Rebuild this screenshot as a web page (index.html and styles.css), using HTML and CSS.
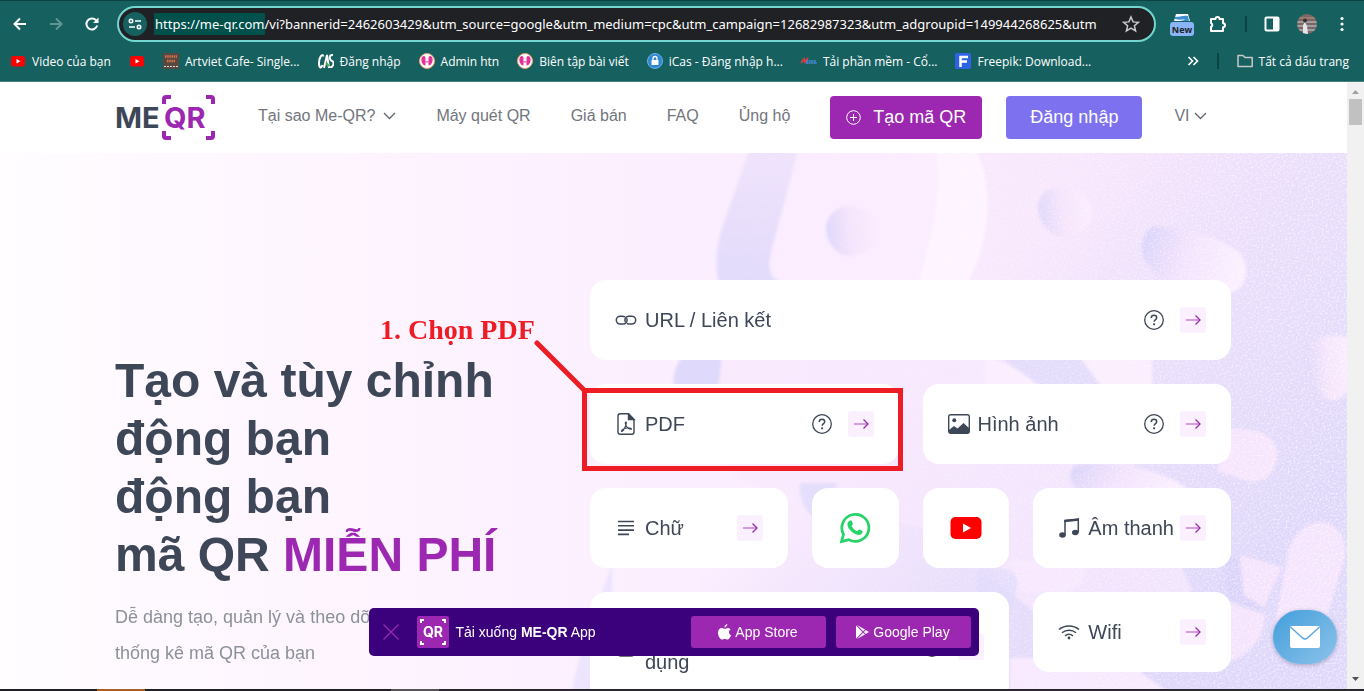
FILE: index.html
```html
<!DOCTYPE html>
<html lang="vi">
<head>
<meta charset="utf-8">
<title>ME-QR</title>
<link rel="stylesheet" href="styles.css">
</head>
<body>
<svg class="sprite" aria-hidden="true">
  <symbol id="arrow" viewBox="0 0 26 26"><path d="M6 13h14" fill="none" stroke="#c77fd2" stroke-width="1.500"/><path d="M15.500 8.500 20 13l-4.500 4.500" fill="none" stroke="#9c27b0" stroke-width="1.300"/></symbol>
  <symbol id="help" viewBox="0 0 20 20"><circle cx="10" cy="10" r="9.300" fill="none" stroke="#3d4757" stroke-width="1.300"/><path d="M7.300 7.900c0-1.700 1.200-2.600 2.700-2.600s2.700.9 2.700 2.400c0 1.900-2.500 2-2.500 4.100" fill="none" stroke="#3d4757" stroke-width="1.500"/><circle cx="10.100" cy="14.300" r="1.100" fill="#3d4757"/></symbol>
  <symbol id="chevron" viewBox="0 0 13 8"><path d="M1 1l5.500 5.500L12 1" fill="none" stroke="#5f6670" stroke-width="1.300"/></symbol>
  <symbol id="yt" viewBox="0 0 16 16"><rect x="1" y="3" width="14" height="10.500" rx="2.500" fill="#f00"/><path d="M6.500 6v4.600l4-2.300z" fill="#fff"/></symbol>
  <symbol id="htn" viewBox="0 0 16 16"><circle cx="8" cy="8" r="7.500" fill="#fff" stroke="#f0a26b"/><path d="M3 4c2-2 3.500-1 3.500 1v7.500C4 13 1 8 3 4zM13 4c-2-2-3.500-1-3.500 1v7.500C12 13 15 8 13 4z" fill="#e5309a"/><path d="M6 8h4v1.500H6z" fill="#f26cb5"/></symbol>
</svg>

<header class="browser">
  <div class="toolbar">
    <button class="tool" aria-label="Back"><svg width="16" height="16" viewBox="0 0 16 16"><path d="M14 8H3M8 2.500 2.500 8 8 13.500" fill="none" stroke="#fff" stroke-width="2"/></svg></button>
    <button class="tool" aria-label="Forward"><svg width="16" height="16" viewBox="0 0 16 16"><path d="M2 8h11M8 2.500 13.500 8 8 13.500" fill="none" stroke="#5f9695" stroke-width="2"/></svg></button>
    <button class="tool" aria-label="Reload"><svg width="16" height="16" viewBox="0 0 16 16"><path d="M13.200 9.500A5.500 5.500 0 1 1 12 4.200L13.500 6" fill="none" stroke="#fff" stroke-width="2"/><path d="M14.500 1.500V7H9z" fill="#fff"/></svg></button>
    <div class="omnibox">
      <button class="site-info" aria-label="Site info"><svg width="14" height="12" viewBox="0 0 14 12" fill="none" stroke="#fff" stroke-width="1.600"><circle cx="3" cy="3" r="1.700"/><path d="M7 3h6M1 9h6"/><circle cx="11" cy="9" r="1.700"/></svg></button>
      <input class="url" aria-label="URL" value="https://me-qr.com/vi?bannerid=2462603429&amp;utm_source=google&amp;utm_medium=cpc&amp;utm_campaign=12682987323&amp;utm_adgroupid=149944268625&amp;utm">
      <button class="tool" aria-label="Bookmark"><svg width="18" height="18" viewBox="0 0 18 18"><path d="M9 2l2.100 4.900 5.300.4-4 3.500 1.200 5.200L9 13.200 4.400 16l1.200-5.200-4-3.500 5.300-.4z" fill="none" stroke="#c9cacc" stroke-width="1.500"/></svg></button>
    </div>
    <button class="tool" aria-label="New"><svg width="24" height="26" viewBox="0 0 24 26"><path d="M6 3h12l2 7H4z" fill="#fff"/><path d="M5 6c5 0 8-2 13-1l1 5H9c3 0 5-1 6-2-3 1-7 1-10 0z" fill="#3f8fd0"/><rect y="11" width="24" height="14" rx="3" fill="#8ab4f8"/><text x="12" y="22" text-anchor="middle" class="badge-text">New</text></svg></button>
    <button class="tool" aria-label="Extensions"><svg width="20" height="20" viewBox="0 0 20 20"><path d="M3 5h4.500a2 2 0 0 1 4 0H15v4.200a2 2 0 0 1 0 4V17H3v-4a2.200 2.200 0 0 0 0-4z" fill="none" stroke="#fff" stroke-width="2" stroke-linejoin="round"/></svg></button>
    <span class="divider"></span>
    <button class="tool" aria-label="Side panel"><svg width="16" height="16" viewBox="0 0 16 16"><rect x="1.500" y="1.500" width="13" height="13" rx="1" fill="none" stroke="#fff" stroke-width="2"/><path d="M9 1h6v14H9z" fill="#fff"/></svg></button>
    <button class="tool" aria-label="Profile"><svg width="20" height="20" viewBox="0 0 20 20"><clipPath id="round"><circle cx="10" cy="10" r="10"/></clipPath><g clip-path="url(#round)"><path fill="#7d6764" d="M0 0h20v20H0z"/><path d="M0 8h20M0 12h20M0 16h20" stroke="#a9b0b4" stroke-width="1.500"/><path d="M0 4h20" stroke="#9a7c70" stroke-width="2"/><path d="M6 20l0-9 2-3 2 4 1 8z" fill="#e6e6ea"/><circle cx="8" cy="6.500" r="2" fill="#3b2f2f"/></g></svg></button>
    <button class="tool" aria-label="Menu"><svg width="16" height="16" viewBox="0 0 16 16" fill="#fff"><circle cx="8" cy="2.500" r="1.600"/><circle cx="8" cy="8" r="1.600"/><circle cx="8" cy="13.500" r="1.600"/></svg></button>
  </div>
  <nav class="bookmarks">
    <a href="#"><svg width="16" height="16"><use href="#yt"/></svg>Video của bạn</a>
    <a href="#" aria-label="YouTube"><svg width="16" height="16"><use href="#yt"/></svg></a>
    <a href="#"><svg width="16" height="16" viewBox="0 0 16 16"><path fill="#594840" d="M0 0h16v16H0z"/><path d="M2 3.500h12M4 8h8" stroke="#d9714a" stroke-width="2.500" stroke-dasharray="1.500 .7"/><path d="M1 13.500h14" stroke="#ddd" stroke-dasharray="2 1"/></svg>Artviet Cafe- Single...</a>
    <a href="#"><svg width="16" height="16" viewBox="0 0 16 16" fill="none" stroke="#fff" stroke-width="2"><path d="M5.500 3.500C4-.5 1 5 1 10s2 6 3.500 2M6 15 9 2l2 13M15 2c-4-1-4 5-1 6s1 7-2 6"/><path d="M8 10l3 3" stroke="#4caf50"/></svg>Đăng nhập</a>
    <a href="#"><svg width="16" height="16"><use href="#htn"/></svg>Admin htn</a>
    <a href="#"><svg width="16" height="16"><use href="#htn"/></svg>Biên tập bài viết</a>
    <a href="#"><svg width="16" height="16" viewBox="0 0 16 16"><circle cx="8" cy="8" r="7.500" fill="#2f86d1" stroke="#6bb2ea"/><rect x="4.500" y="7" width="7" height="5" fill="#fff"/><path d="M6 7V5.500a2 2 0 0 1 4 0V7" fill="none" stroke="#fff" stroke-width="1.300"/></svg>iCas - Đăng nhập h...</a>
    <a href="#"><svg width="16" height="16" viewBox="0 0 16 16"><path d="M0 10l3-4 1 3 3-4" fill="none" stroke="#e33b3b" stroke-width="1.800"/><path d="M5 8h10M5 10h11" stroke="#4a8de0" stroke-width="1.500" stroke-dasharray="2 .6"/></svg>Tải phần mềm - Cổ...</a>
    <a href="#"><svg width="16" height="16" viewBox="0 0 16 16"><rect width="16" height="16" rx="2" fill="#2f63e6"/><path d="M5.500 14V4H13M5.500 8.500H12" fill="none" stroke="#fff" stroke-width="2.500"/></svg>Freepik: Download...</a>
    <button class="tool more" aria-label="More bookmarks"><svg width="12" height="10" viewBox="0 0 12 10"><path d="M1.500 1l4 4-4 4M6.500 1l4 4-4 4" fill="none" stroke="#fff" stroke-width="1.600"/></svg></button>
    <span class="divider"></span>
    <a href="#"><svg width="16" height="16" viewBox="0 0 16 16"><path d="M1 2.500h5l2 2h7.200v9H1z" fill="none" stroke="#c6c8c8" stroke-width="1.500" stroke-linejoin="round"/></svg>Tất cả dấu trang</a>
  </nav>
</header>

<div class="viewport">
  <div class="page">
    <header class="site-header">
      <a class="logo" href="#" aria-label="ME QR"><svg width="100" height="46" viewBox="0 0 100 46"><path d="M49 9V4q0-2 2-2h5M91 2h5q2 0 2 2v5M49 36v5q0 2 2 2h5M91 43h5q2 0 2-2v-5" fill="none" stroke="#9c27b0" stroke-width="4"/></svg><span class="logo-me">ME</span><span class="logo-qr">QR</span></a>
      <nav class="site-nav">
        <a href="#">Tại sao Me-QR?<svg width="13" height="8"><use href="#chevron"/></svg></a>
        <a href="#">Máy quét QR</a>
        <a href="#">Giá bán</a>
        <a href="#">FAQ</a>
        <a href="#">Ủng hộ</a>
      </nav>
      <div class="actions">
        <button class="btn create"><svg width="15" height="15" viewBox="0 0 15 15" fill="none" stroke="#fff"><circle cx="7.500" cy="7.500" r="6.800"/><path d="M7.500 4v7M4 7.500h7"/></svg>Tạo mã QR</button>
        <button class="btn login">Đăng nhập</button>
        <label class="lang"><select aria-label="Ngôn ngữ"><option>VI</option></select><svg width="13" height="8"><use href="#chevron"/></svg></label>
      </div>
    </header>

    <main class="hero">
      <svg class="backdrop" viewBox="0 0 1347 536" preserveAspectRatio="xMaxYMin slice" aria-hidden="true">
        <defs>
          <linearGradient id="base"><stop offset="0" stop-color="#fffdff"/><stop offset=".2" stop-color="#fef6ff"/><stop offset=".45" stop-color="#fcf0ff"/><stop offset=".8" stop-color="#f8e7fd"/><stop offset="1" stop-color="#efdffb"/></linearGradient>
          <linearGradient id="lower" x1=".3" y1="0" x2="1" y2=".6"><stop offset=".3" stop-color="#e6dcfb" stop-opacity="0"/><stop offset=".75" stop-color="#e6dcfb"/><stop offset="1" stop-color="#e0d8fa"/></linearGradient>
          <linearGradient id="band" x1="0" y1="0" x2="0" y2="1"><stop offset="0" stop-color="#f0e3fc"/><stop offset="1" stop-color="#e0dafb"/></linearGradient>
          <linearGradient id="dot" x1="0" y1=".4" x2="1" y2=".3"><stop offset="0" stop-color="#dfd8fa"/><stop offset=".45" stop-color="#f6e4fc"/><stop offset="1" stop-color="#fbedff"/></linearGradient>
          <linearGradient id="pill" x1="0" y1=".4" x2="1" y2=".6"><stop offset="0" stop-color="#dcd5fa"/><stop offset=".4" stop-color="#f3e2fd"/><stop offset="1" stop-color="#fbf0ff"/></linearGradient>
          <filter id="soft" x="-20%" y="-20%" width="140%" height="140%"><feGaussianBlur stdDeviation="1.500"/></filter>
          <filter id="grain"><feTurbulence type="fractalNoise" baseFrequency=".5" numOctaves="2"/><feColorMatrix values="0 0 0 0 1  0 0 0 0 1  0 0 0 0 1  1.800 0 0 0 -.8"/></filter>
          <linearGradient id="fade"><stop offset=".5" stop-color="#000"/><stop offset="1" stop-color="#fff"/></linearGradient>
          <mask id="right"><path fill="url(#fade)" d="M0 0h1347v536H0z"/></mask>
        </defs>
        <path fill="url(#base)" d="M0 0h1347v536H0z"/>
        <path fill="url(#lower)" d="M700 0h647v536H700z"/>
        <g filter="url(#soft)">
          <path d="M750-5h49l-26 100c-6 20-6 30 12 36v15h-58c-14-20-12-45-6-68z" fill="url(#band)"/>
          <path d="M799-5h176c22 42 12 100-7 135H788c-20-10-20-20-15-38z" fill="#fbedff"/>
          <path d="M935-5h40c22 42 12 100-7 135h-50c14-45 25-90 17-135z" fill="#fdf4ff"/>
          <path d="M846 53c20 0 36 12 34 26-2 16-18 24-32 24-14-2-22-16-22-28 0-10 8-20 20-22z" fill="url(#dot)"/>
          <path d="M1045 38c20-10 48 0 47 24-1 14-16 22-30 22-14-2-24-18-24-29 0-7 3-13 7-17z" fill="url(#dot)"/>
          <path d="M1155 73c40 4 94 16 91 46-2 18-16 26-34 22-40-8-68-22-70-44-1-12 5-22 13-24z" fill="url(#pill)"/>
          <path d="M690 202c-22 10-22 40-8 66l60 60 190 50 200 158 60-100-100-214-130-20z" fill="#f8e8fe" opacity=".7"/>
          <path d="M684 202h38l-4 36h-44c-2-16 2-28 10-36z" fill="#dfd9fb"/>
          <path d="M800 330h38l-20 36c-14-6-20-24-18-36z" fill="#e0dafb" opacity=".8"/>
          <path d="M1000 205h90l20 35h-60z" fill="#e4dcfb"/>
          <path d="M985 205c30 6 45 20 60 35h-60zM1080 205h72v35h-45z" fill="#fbeefe"/>
          <path d="M1308 190c20-10 39-10 45 0v40c-10 20-28 24-36 6-8-14-14-34-9-46z" fill="url(#dot)"/>
          <path d="M1075 312c30-4 85 0 115 26h-110c-12-6-12-18-5-26z" fill="url(#pill)"/>
          <path d="M1225 276c30-2 54 6 52 28-2 18-14 26-30 24l-30-10z" fill="#f7e5fd"/>
          <path d="M1289 396c8-22 28-32 42-24 14 8 16 24 12 38l-18 60h-50z" fill="#f5e4fd"/>
          <path d="M1222 400l20 4 30 4-14 50-30-10z" fill="#d9d2fa" opacity=".7"/>
          <path d="M1240 402l42 12-18 40-20-12zM1226 448l39 14c-2 26-18 44-39 46z" fill="#f5e3fd"/>
          <path d="M612 410c-12 40-34 86-40 130h40V410z" fill="#e6dffc" opacity=".7"/>
          <path d="M980 408l40 14-10 40-34-10z" fill="#e0dafb" opacity=".7"/>
          <path d="M1010 408h72c8 20-4 28-20 31h-40z" fill="#f8e8fe"/>
          <path d="M1010 505h110l50 35H1010z" fill="#f8e9fe"/>
        </g>
        <path d="M0 0h1347v536H0z" filter="url(#grain)" mask="url(#right)"/>
      </svg>

      <div class="hero-grid">
        <section class="intro">
          <h1>Tạo và tùy chỉnh<br>động bạn<br>động bạn<br>mã QR <em>MIỄN PHÍ</em></h1>
          <p>Dễ dàng tạo, quản lý và theo dõi<br>thống kê mã QR của bạn</p>
        </section>

        <section class="cards">
          <div class="card full">
            <a class="label" href="#"><svg width="22" height="22" viewBox="0 0 22 22" fill="none" stroke="#3d4757" stroke-width="1.500"><path d="M10 7.900Q9 7.200 7.500 7.200H5.200a3.900 3.900 0 0 0 0 7.800h3a3.900 3.900 0 0 0 3.900-3.900q0-1-.6-1.900"/><path d="M12 14.300q1 .7 2.500.7h2.300a3.900 3.900 0 0 0 0-7.800h-3a3.900 3.900 0 0 0-3.900 3.900q0 1 .6 1.900"/></svg>URL / Liên kết</a>
            <button class="help" aria-label="Trợ giúp"><svg width="20" height="20"><use href="#help"/></svg></button>
            <a class="go" href="#" aria-label="URL"><svg width="26" height="26"><use href="#arrow"/></svg></a>
          </div>
          <div class="card half">
            <a class="label" href="#"><svg width="22" height="22" viewBox="0 0 22 22" fill="none" stroke="#3d4757" stroke-width="1.400"><path d="M13.500.8H5.300A2.300 2.300 0 0 0 3 3.100v15.800a2.300 2.300 0 0 0 2.300 2.300h11.400a2.300 2.300 0 0 0 2.300-2.300V6.500z"/><path d="M13.500.8v5.700H19z" fill="#3d4757"/><path d="M11 9c-1.200 0-.5 3 .5 4.500s3 3 4.500 2.700-1-1.700-4-1.200-5.500 2-5.500 3 2-.2 3-2.500S12 9 11 9z" stroke-width="1.200"/></svg>PDF</a>
            <button class="help" aria-label="Trợ giúp"><svg width="20" height="20"><use href="#help"/></svg></button>
            <a class="go" href="#" aria-label="PDF"><svg width="26" height="26"><use href="#arrow"/></svg></a>
            <span class="note-frame"></span>
            <svg class="note-line" width="56" height="56" viewBox="0 0 56 56"><path d="M3 3l48 48" stroke="#ee1c25" stroke-width="5" stroke-linecap="round"/></svg>
            <strong class="note-text">1. Chọn PDF</strong>
          </div>
          <div class="card half">
            <a class="label" href="#"><svg width="22" height="22" viewBox="0 0 22 22"><rect x=".7" y="1.700" width="20.600" height="18.600" rx="2" fill="none" stroke="#3d4757" stroke-width="1.400"/><circle cx="6.300" cy="7.300" r="2" fill="#3d4757"/><path d="M1 17l5-4 3.500 2.500L15.500 10l5.500 5v3.500q0 2-2 2H3q-2 0-2-2z" fill="#3d4757"/></svg>Hình ảnh</a>
            <button class="help" aria-label="Trợ giúp"><svg width="20" height="20"><use href="#help"/></svg></button>
            <a class="go" href="#" aria-label="Hình ảnh"><svg width="26" height="26"><use href="#arrow"/></svg></a>
          </div>
          <div class="card double">
            <a class="label" href="#"><svg width="22" height="22" viewBox="0 0 22 22"><path d="M3 4.500h16M3 8.800h16M3 13.100h16M3 17.400h11" stroke="#3d4757" stroke-width="1.600"/></svg>Chữ</a>
            <a class="go" href="#" aria-label="Chữ"><svg width="26" height="26"><use href="#arrow"/></svg></a>
          </div>
          <a class="card single" href="#" aria-label="WhatsApp"><svg width="32" height="32" viewBox="0 0 32 32"><path d="M2.500 29.500l2-7.200A13.500 13.500 0 1 1 9.700 27.600z" fill="none" stroke="#25d366" stroke-width="2.700"/><path d="M11 8.500c.8-.4 1.500-.2 1.900.7l1 2.300c.3.900-1.500 2-1.200 2.700 1.200 2.300 3 3.900 5.200 4.900.9.300 1.700-1.900 2.600-1.500l2.500 1.200c.8.500.6 1.500.1 2.400-.9 1.500-2.700 2-4.600 1.600-4.800-1.200-9-5.500-10-9.300-.4-2 .6-4.300 2.500-5z" fill="#25d366"/></svg></a>
          <a class="card single" href="#" aria-label="YouTube"><svg width="32" height="22" viewBox="0 0 32 22"><rect x=".5" width="31" height="22" rx="5" fill="#f00"/><path d="M13 6.500v9l8-4.500z" fill="#fff"/></svg></a>
          <div class="card double">
            <a class="label" href="#"><svg width="22" height="22" viewBox="0 0 22 22"><path d="M7 18V3.500l13.300-1.300v13.300" fill="none" stroke="#3d4757" stroke-width="1.500"/><path d="M6.300 3L21 1.500v2.300L6.300 5.200z" fill="#3d4757"/><ellipse cx="4.500" cy="18" rx="3.300" ry="2.700" fill="#3d4757"/><ellipse cx="17.300" cy="15.500" rx="3.300" ry="2.700" fill="#3d4757"/></svg>Âm thanh</a>
            <a class="go" href="#" aria-label="Âm thanh"><svg width="26" height="26"><use href="#arrow"/></svg></a>
          </div>
          <div class="card quad">
            <a class="label two-line" href="#"><svg width="22" height="22" viewBox="0 0 22 22"><rect x="3" y="1" width="16" height="19" rx="3" fill="none" stroke="#3d4757" stroke-width="1.500"/></svg><span>dụng</span></a>
            <button class="help" aria-label="Trợ giúp"><svg width="20" height="20"><use href="#help"/></svg></button>
            <a class="go" href="#" aria-label="Mở"><svg width="26" height="26"><use href="#arrow"/></svg></a>
          </div>
          <div class="card double">
            <a class="label" href="#"><svg width="22" height="22" viewBox="0 0 22 22" fill="none" stroke="#3d4757" stroke-width="1.500"><path d="M1 8.500c5.500-4.700 14.500-4.700 20 0M4 11.700c4-3.400 10-3.400 14 0M7 14.900c2.500-2 5.500-2 8 0"/><circle cx="11" cy="17" r="1.400" fill="#3d4757" stroke="none"/></svg>Wifi</a>
            <a class="go" href="#" aria-label="Wifi"><svg width="26" height="26"><use href="#arrow"/></svg></a>
          </div>
        </section>
      </div>
    </main>

    <aside class="app-banner">
      <button class="close" aria-label="Đóng"><svg width="16" height="16" viewBox="0 0 16 16"><path d="M.5.5l15 15M15.500.5l-15 15" stroke="#9c27b0" stroke-width="1.200"/></svg></button>
      <svg class="app-icon" width="32" height="32" viewBox="0 0 32 32"><rect width="32" height="32" rx="2" fill="#9c27b0"/><path d="M4 7V4h3M25 4h3v3M4 25v3h3M25 28h3v-3" fill="none" stroke="#fff" stroke-width="2"/><text x="16" y="21" text-anchor="middle" class="app-icon-text">QR</text></svg>
      <span class="app-text">Tải xuống <b>ME-QR</b> App</span>
      <button class="store"><svg width="13" height="16" viewBox="0 0 13 16" fill="#fff"><path d="M9.300 0c.1 1.800-1.300 3.300-2.900 3.400C6.200 1.700 7.700.2 9.300 0zM12.600 5.400c-2.300 1.300-2 4.600.4 5.600-.7 2.200-2 4.600-3.500 4.600-1 0-1.500-.6-2.700-.6s-1.700.6-2.600.6C2.200 15.600 0 12 0 8.700 0 5.700 1.800 4 3.700 4c1.200 0 2.100.8 3 .8s2-.9 3.300-.9c1 0 2 .6 2.600 1.500z"/></svg>App Store</button>
      <button class="store"><svg width="13" height="14" viewBox="0 0 13 14" fill="#fff"><path d="M0 .5v13L6.500 7zM1 0l6.200 6.300L9 4.500zM1 14l6.200-6.300L9 9.500zM9.800 5L7.900 7l1.900 2L13 7z"/></svg>Google Play</button>
    </aside>
    <button class="mail" aria-label="Mail"><svg width="32" height="24" viewBox="0 0 32 24"><rect x="1" y="1" width="30" height="22" rx="2" fill="#fff"/><path d="M1.500 2l12.300 11.200q2.200 1.800 4.400 0L30.500 2" fill="none" stroke="#59a9df" stroke-width="1.500"/></svg></button>
  </div>
  <div class="scrollbar">
    <svg width="7" height="4" viewBox="0 0 7 4"><path d="M3.500 0L7 4H0z" fill="#a0a0a0"/></svg>
    <span class="thumb"></span>
    <svg class="down" width="7" height="4" viewBox="0 0 7 4"><path d="M3.500 4L7 0H0z" fill="#505050"/></svg>
  </div>
</div>
<div class="taskbar"></div>
</body>
</html>
```
FILE: styles.css
```css
* { box-sizing: border-box; }

body {
  margin: 0;
  height: 100vh;
  display: flex;
  flex-direction: column;
  overflow: hidden;
  font-family: "Liberation Sans", Arial, sans-serif;
  color: #3d4757;
}

a { color: inherit; text-decoration: none; }
button { border: 0; padding: 0; background: none; font: inherit; color: inherit; }
svg { display: block; flex: none; }
.sprite { position: absolute; width: 0; height: 0; }

/* Browser frame */
.browser {
  flex: none;
  background: #166160;
  border-top: 1px solid #0b4342;
  border-bottom: 1px solid #457f7e;
  font-family: "Open Sans", "Noto Sans", sans-serif;
  font-size: 12px;
  color: #fff;
}
.toolbar { display: flex; align-items: center; gap: 17px; height: 46px; padding: 0 14px 0 12px; }
.tool { display: grid; place-items: center; flex: none; }
.toolbar > .tool:nth-child(-n+2) { margin-right: 3px; }
.toolbar > .tool:nth-child(5) { margin-right: -3px; }
.omnibox {
  flex: 1;
  min-width: 0;
  display: flex;
  align-items: center;
  gap: 7px;
  height: 36px;
  margin-right: -3px;
  padding: 0 14px 0 4px;
  border: 2px solid #74d6d0;
  border-radius: 18px;
  background: #202124;
}
.site-info { display: grid; place-items: center; flex: none; width: 24px; height: 24px; border-radius: 50%; background: #166160; }
.url {
  flex: 1;
  min-width: 0;
  height: 22px;
  padding: 0 1px;
  border: 0;
  background: linear-gradient(#00504c, #00504c) no-repeat 0 0 / 111px 22px;
  font: 13px "Noto Sans", "Open Sans", sans-serif;
  color: #fff;
}
.badge-text { font: bold 9px "Open Sans", sans-serif; fill: #202124; }
.divider { width: 2px; height: 16px; background: #0b4342; }

.bookmarks { display: flex; align-items: center; gap: 18px; height: 34px; padding: 0 15px 6px 10px; white-space: nowrap; }
.bookmarks a { display: flex; align-items: center; gap: 6px; }
.more { margin-left: auto; }

/* Page window */
.viewport { flex: 1; min-height: 0; display: flex; }
.page { position: relative; flex: 1; min-width: 0; display: flex; flex-direction: column; overflow: hidden; background: #fff; }
.scrollbar { display: flex; flex-direction: column; align-items: center; width: 17px; padding: 8px 0; background: #f1f1f1; }
.thumb { width: 13px; height: 26px; margin-top: 5px; background: #c1c1c1; }
.down { margin-top: auto; }
.taskbar {
  flex: none;
  height: 2px;
  background: linear-gradient(90deg, #1f1f24 97px, #a75f2c 97px 145px, #1f1f24 145px 391px, #555 391px 439px, #28282c 439px);
}

/* Site header */
.site-header { display: flex; align-items: center; flex: none; height: 71px; padding: 0 140px 0 115px; }
.logo { display: grid; grid-template-columns: 49px 51px; align-items: center; font: bold 29px/46px Inter, sans-serif; }
.logo svg { grid-area: 1 / 1 / 2 / 3; }
.logo-me { grid-area: 1 / 1; color: #3d4757; }
.logo-qr { grid-area: 1 / 2; color: #9c27b0; }
.site-nav { display: flex; gap: 40px; margin-left: 43px; padding-bottom: 4px; font-size: 16px; color: #72767c; white-space: nowrap; }
.site-nav a { display: flex; align-items: center; gap: 8px; }
.actions { display: flex; align-items: center; gap: 24px; margin-left: 40px; }
.btn {
  display: flex;
  align-items: center;
  gap: 12px;
  height: 43px;
  padding: 0 16px;
  border-radius: 4px;
  font-size: 18px;
  color: #fff;
  white-space: nowrap;
}
.create { background: #9c27b0; }
.login { padding: 0 24px; background: #7d71f0; }
.lang { display: flex; align-items: center; gap: 4px; margin-left: 8px; padding-bottom: 4px; }
.lang select { appearance: none; border: 0; padding: 0; background: none; font: 16px "Liberation Sans", Arial, sans-serif; color: #72767c; }

/* Hero */
.hero { position: relative; flex: 1; min-height: 0; overflow: hidden; }
.backdrop { position: absolute; inset: 0; width: 100%; height: 100%; }
.hero-grid { position: relative; display: grid; grid-template-columns: 475fr 641fr; align-items: start; padding: 127px 116px 0 115px; }
.intro { padding-top: 72px; white-space: nowrap; }
h1 { margin: 0; font-size: 48px; line-height: 58px; font-weight: bold; }
h1 em { font-style: normal; color: #9c27b0; }
.intro p { margin: 15px 0 0; font-size: 18px; line-height: 36px; color: #8b919b; }

.cards { display: grid; grid-template-columns: repeat(6, minmax(0, 1fr)); align-items: start; gap: 24px; }
.card {
  position: relative;
  display: flex;
  align-items: center;
  min-height: 80px;
  padding: 25px;
  border-radius: 16px;
  background: #fff;
  font-size: 20px;
  line-height: 30px;
}
.full { grid-column: span 6; }
.half { grid-column: span 3; }
.double { grid-column: span 2; }
.quad { grid-column: span 4; }
.single { justify-content: center; padding-block: 0; }
.label { display: flex; align-items: center; gap: 8px; margin-right: auto; white-space: nowrap; }
.two-line span { padding-top: 30px; }
.help { margin-right: 16px; }
.go { width: 26px; height: 26px; border-radius: 3px; background: #fbf0fe; }

/* Step callout drawn over the PDF card */
.note-frame { position: absolute; inset: 4px -4px -7px -8px; border: 5px solid #ee1c25; }
.note-line { position: absolute; left: -56px; top: -44px; }
.note-text {
  position: absolute;
  left: -210px;
  top: -69px;
  font-family: "Liberation Serif", "Times New Roman", serif;
  font-size: 28px;
  color: #ee1c25;
  white-space: nowrap;
}

/* App download banner */
.app-banner {
  position: absolute;
  left: 50%;
  bottom: 33px;
  transform: translateX(-50%);
  display: flex;
  align-items: center;
  width: 610px;
  height: 48px;
  padding: 0 8px 0 14px;
  border-radius: 5px;
  background: #3b007c;
  font-size: 14px;
  color: #fff;
}
.app-icon { margin: 0 7px 0 18px; }
.app-icon-text { font: bold 14px Inter, sans-serif; fill: #fff; }
.app-text { margin-right: auto; }
.store {
  display: flex;
  align-items: center;
  justify-content: center;
  gap: 4px;
  width: 135px;
  height: 32px;
  margin-left: 10px;
  border-radius: 3px;
  background: #9c27b0;
}

.mail {
  position: absolute;
  right: 10px;
  bottom: 25px;
  display: grid;
  place-items: center;
  width: 64px;
  height: 54px;
  border-radius: 27px;
  background: linear-gradient(135deg, #429edb, #8dc3ea);
  box-shadow: 0 1px 4px rgba(60, 60, 100, .4);
}
```
